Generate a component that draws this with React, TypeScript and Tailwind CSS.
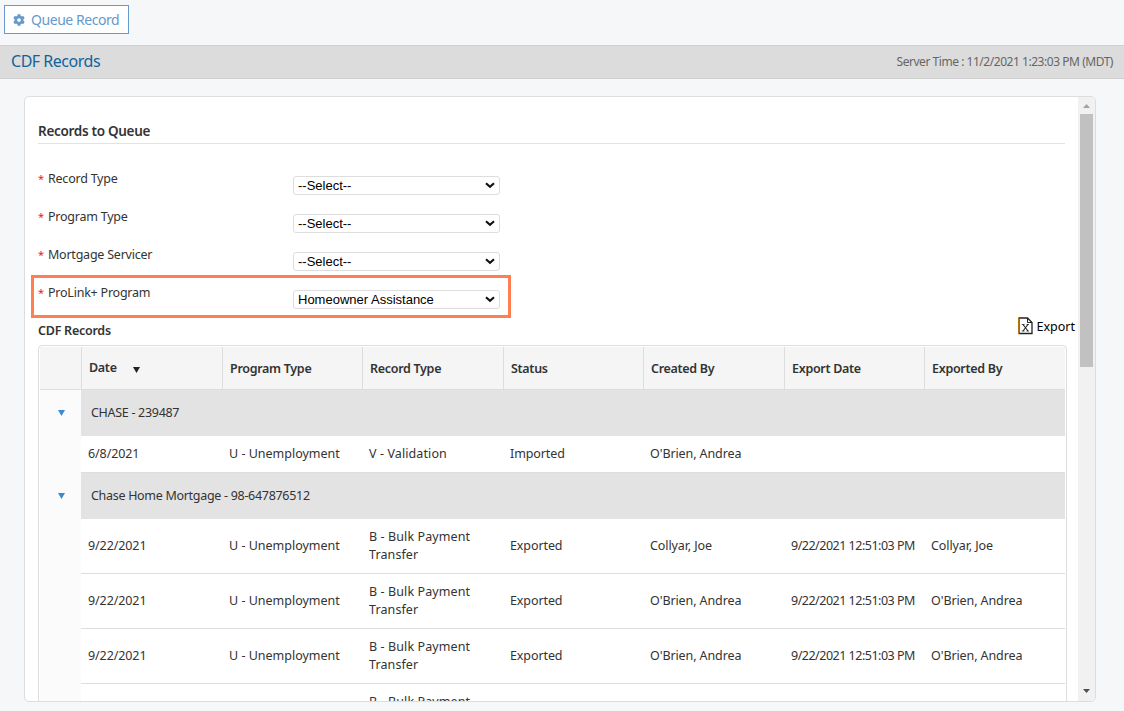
import type { ReactNode } from "react";
import { FaCog } from "react-icons/fa";

const COLS = "grid grid-cols-[41px_141px_140px_141px_140px_141px_140px_141px]";

function Label({ children }: { children: ReactNode }) {
  return (
    <div className="flex w-[255px] text-[12.5px] leading-[18px] tracking-[-0.23px] text-[#333]">
      <span className="w-[10px] text-[11px] text-[#f01818]">*</span>
      {children}
    </div>
  );
}

function SelectBox({ value }: { value: string }) {
  return (
    <div className="mt-[6px] flex h-[19px] w-[207px] items-center justify-between rounded-[3px] border border-[#ddd] bg-white pr-[4px] pl-[4px] font-['Liberation_Sans',sans-serif] text-[13px] leading-[17px] text-black">
      <span>{value}</span>
      <svg width="10" height="7" viewBox="0 0 10 7" fill="none">
        <path d="M1 1.2 L5 4.8 L9 1.2" stroke="#111" strokeWidth="2.1" />
      </svg>
    </div>
  );
}

function Field({ label, value }: { label: string; value: string }) {
  return (
    <div className="flex h-[38px] items-start">
      <Label>{label}</Label>
      <SelectBox value={value} />
    </div>
  );
}

function GroupRow({ name }: { name: string }) {
  return (
    <div className="flex h-[46px]">
      <div className="flex w-[41px] items-center justify-center bg-[#fbfbfb]">
        <svg width="7" height="6" viewBox="0 0 7 6" className="ml-[2px]">
          <path d="M0 0H7L3.5 6Z" fill="#3b8bd0" />
        </svg>
      </div>
      <div className="flex flex-1 items-center bg-[#e3e3e3] pl-[10px] text-[12.5px] tracking-[-0.3px] text-[#333]">
        {name}
      </div>
    </div>
  );
}

type Rec = { date: string; type: string; status: string; by: string; exported?: string; exporter?: string };

function DataRow({ r, tall }: { r: Rec; tall?: boolean }) {
  const cell = "flex items-center border-b border-[#ddd] pl-[7px]";
  return (
    <div className={`${COLS} ${tall ? "h-[55px]" : "h-[37px]"} text-[12.5px] leading-[18px] text-[#333]`}>
      <div className="bg-[#fbfbfb]" />
      <div className={`${cell} tracking-[-0.1px]`}>{r.date}</div>
      <div className={cell}>U - Unemployment</div>
      <div className={`${cell} tracking-[0.1px]`}>
        <span className="w-[120px]">{r.type}</span>
      </div>
      <div className={`${cell} tracking-[-0.1px]`}>{r.status}</div>
      <div className={`${cell} tracking-[-0.1px]`}>{r.by}</div>
      <div className={`${cell} whitespace-nowrap tracking-[-0.5px]`}>{r.exported}</div>
      <div className={`${cell} tracking-[-0.1px]`}>{r.exporter}</div>
    </div>
  );
}

const HEADERS = ["Date", "Program Type", "Record Type", "Status", "Created By", "Export Date", "Exported By"];

const bulk = (by: string): Rec => ({
  date: "9/22/2021",
  type: "B - Bulk Payment Transfer",
  status: "Exported",
  by,
  exported: "9/22/2021 12:51:03 PM",
  exporter: by,
});

const BULK = ["Collyar, Joe", "O'Brien, Andrea", "O'Brien, Andrea", "O'Brien, Andrea"].map(bulk);

export default function App() {
  return (
    <div className="flex h-[711px] w-[1124px] flex-col overflow-hidden bg-[#f6f7f9] font-['Noto_Sans',sans-serif]">
      <div className="h-[45px] pt-[5px] pl-[4px]">
        <button className="flex h-[29px] w-[125px] items-center border border-[#6699cc] bg-white pl-[8px] text-[14px] whitespace-nowrap text-[#6699cc]">
          <FaCog className="mr-[6px] h-[12px] w-[12px]" />
          <span className="tracking-[-0.45px]">Queue Record</span>
        </button>
      </div>
      <header className="flex h-[34px] items-center justify-between border-y border-[#d0d0d0] bg-[#dcdcdc] pr-[11px] pl-[11px]">
        <h1 className="pb-[2px] text-[16px] tracking-[-0.48px] text-[#10639b]">CDF Records</h1>
        <span className="text-[12px] tracking-[-0.46px] text-[#666]">Server Time : 11/2/2021 1:23:03 PM (MDT)</span>
      </header>

      <main className="mt-[17px] ml-[24px] flex h-[606px] w-[1072px] overflow-hidden rounded-[5px] border border-[#ddd] bg-white">
        <div className="w-[1053px] overflow-hidden pl-[13px]">
          <h2 className="mt-[24px] h-[23px] w-[1027px] border-b border-[#e2e2e2] text-[13.5px] leading-[20px] font-semibold tracking-[-0.3px] text-[#333]">
            Records to Queue
          </h2>
          <section className="relative mt-[26px] h-[151px]">
            <Field label="Record Type" value="--Select--" />
            <Field label="Program Type" value="--Select--" />
            <Field label="Mortgage Servicer" value="--Select--" />
            <Field label="ProLink+ Program" value="Homeowner Assistance" />
            <div className="pointer-events-none absolute top-[105px] -left-[7px] h-[43px] w-[480px] border-[3px] border-[#ff7f50]" />
          </section>
          <div className="flex h-[24px] items-start justify-between pr-[2px]">
            <h3 className="text-[12.5px] leading-[20px] font-semibold tracking-[-0.25px] text-[#333]">CDF Records</h3>
            <div className="-mt-[4px] mr-px flex items-center text-[12.5px] leading-[20px] text-black">
              <svg width="15" height="18" viewBox="0 0 15 18" className="mr-[4px] -mt-[2px]" fill="none" stroke="#222">
                <path d="M1 1H9.5L14 5.5V16.5H1Z" fill="#fff" strokeWidth="1.3" />
                <path d="M9.5 1V5.5H14" />
                <path d="M5 7.5L10 14M10 7.5L5 14" strokeWidth="1.1" />
                <path d="M3.8 7.5H6.5M8.5 7.5H11M3.8 14H6.5M8.5 14H11" strokeWidth="0.8" />
                <path d="M0.7 1V17" stroke="#b8740c" strokeWidth="1.4" />
              </svg>
              Export
            </div>
          </div>

          <div className="w-[1029px] rounded-t-[4px] border border-[#ddd] p-px">
            <div className={`${COLS} h-[43px] text-[12.5px] font-semibold tracking-[-0.3px] text-[#333]`}>
              <div className="border-b border-[#ddd] bg-[#f5f5f5]" />
              {HEADERS.map((h) => (
                <div
                  key={h}
                  className={`flex items-center border-b border-l border-[#ddd] bg-[#f5f5f5] pl-[7px] ${h === "Date" ? "" : "pt-[2px]"}`}
                >
                  {h}
                  {h === "Date" && (
                    <svg width="7" height="6" viewBox="0 0 7 6" className="mt-[3px] ml-[16px]">
                      <path d="M0 0H7L3.5 6Z" fill="#222" />
                    </svg>
                  )}
                </div>
              ))}
            </div>
            <GroupRow name="CHASE - 239487" />
            <DataRow r={{ date: "6/8/2021", type: "V - Validation", status: "Imported", by: "O'Brien, Andrea" }} />
            <GroupRow name="Chase Home Mortgage - 98-647876512" />
            {BULK.map((r, i) => (
              <DataRow key={i} r={r} tall />
            ))}
          </div>
        </div>
        <div className="flex w-[17px] flex-col items-center bg-[#f1f1f1]">
          <div className="flex h-[17px] items-center">
            <svg width="7" height="4" viewBox="0 0 7 4">
              <path d="M0 4L3.5 0L7 4Z" fill="#a3a3a3" />
            </svg>
          </div>
          <div className="h-[253px] w-[13px] bg-[#c1c1c1]" />
          <div className="mt-auto flex h-[20px] items-center">
            <svg width="7" height="4" viewBox="0 0 7 4">
              <path d="M0 0L3.5 4L7 0Z" fill="#505050" />
            </svg>
          </div>
        </div>
      </main>
    </div>
  );
}
